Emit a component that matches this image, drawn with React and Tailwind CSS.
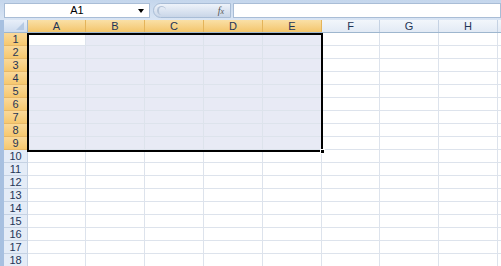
import React from 'react';

const cols = ['A', 'B', 'C', 'D', 'E', 'F', 'G', 'H', ''];
const widths = ['w-[58px]', 'w-[59px]', 'w-[59px]', 'w-[59px]', 'w-[59px]', 'w-[58px]', 'w-[59px]', 'w-[59px]', 'w-[30px]'];
const rows = Array.from({ length: 18 }, (_, i) => i + 1);

const isSel = (c, r) => c < 5 && r <= 9;

export default function App() {
  return (
    <div className="w-[501px] h-[266px] overflow-hidden bg-[#c9d9ee] font-['Liberation_Sans',Arial,sans-serif] text-[11px] text-[#1f3556]">
      {/* formula bar */}
      <div className="h-[20px] flex items-center pt-[1px] pl-[4px] bg-gradient-to-b from-[#c4d6ec] to-[#d9e5f4]">
        <div className="relative shrink-0 w-[146px] h-[15px] bg-white border border-[#a9bdd6] flex items-center justify-center text-[11px] text-black">
          A1
          <span className="absolute right-[5px] top-[5px] w-0 h-0 border-l-[3px] border-r-[3px] border-t-[4px] border-l-transparent border-r-transparent border-t-black" />
        </div>
        <div className="relative shrink-0 ml-[3px] w-[78px] h-[15px] rounded-l-full bg-gradient-to-b from-[#eef3fa] to-[#c9d6e8] border border-[#a9bdd6] flex items-center justify-end pr-[6px]">
          <span className="absolute left-[3px] top-[2px] w-[9px] h-[9px] rounded-full border-l-2 border-t border-[#b5c4d8]" />
          <span className="italic text-[10px] text-[#555] font-['Liberation_Serif',serif]">f<span className="text-[8px]">x</span></span>
        </div>
        <div className="ml-[2px] flex-1 h-[15px] bg-white border border-[#a9bdd6]" />
      </div>

      <div className="relative flex">
        <div className="w-[4px] shrink-0 bg-[#a7c0e0]" />
        <div className="flex flex-col">
          {/* column header */}
          <div className="flex h-[13px] border-b border-[#9eb6ce]">
            <div className="relative shrink-0 w-[24px] border-r border-[#9eb6ce] bg-gradient-to-b from-[#e8eff9] to-[#cddbee]">
              <span className="absolute right-[3px] bottom-[2px] w-0 h-0 border-l-[8px] border-b-[8px] border-l-transparent border-b-[#b6cae3]" />
            </div>
            {cols.map((c, i) => (
              <div
                key={i}
                className={`${widths[i]} shrink-0 border-r flex items-center justify-center ${
                  i < 5
                    ? 'bg-gradient-to-b from-[#fae0a6] to-[#f3c56a] border-[#e4b45a]'
                    : 'bg-gradient-to-b from-[#f2f6fb] to-[#e2eaf5] border-[#c5d2e3]'
                }`}
              >
                {c}
              </div>
            ))}
          </div>
          {rows.map((r) => (
            <div key={r} className="flex h-[13px]">
              <div
                className={`w-[24px] shrink-0 flex items-center justify-center border-r border-b ${
                  r <= 9 ? 'bg-gradient-to-b from-[#fad999] to-[#f6c86f] border-[#e6b868]' : 'bg-[#e4ecf7] border-[#c5d2e3]'
                }`}
              >
                {r}
              </div>
              {cols.map((c, i) => (
                <div
                  key={i}
                  className={`${widths[i]} shrink-0 border-r border-b border-[#dde3ec] ${
                    i === 0 && r === 1 ? 'bg-white' : isSel(i, r) ? 'bg-[#e8eaf5]' : 'bg-white'
                  }`}
                />
              ))}
            </div>
          ))}
        </div>

        {/* selection frame */}
        <div className="absolute left-[27px] top-[13px] w-[296px] h-[119px] border-2 border-black pointer-events-none">
          <span className="absolute -right-[4px] -bottom-[4px] w-[5px] h-[5px] bg-black border border-white" />
        </div>
      </div>
    </div>
  );
}
